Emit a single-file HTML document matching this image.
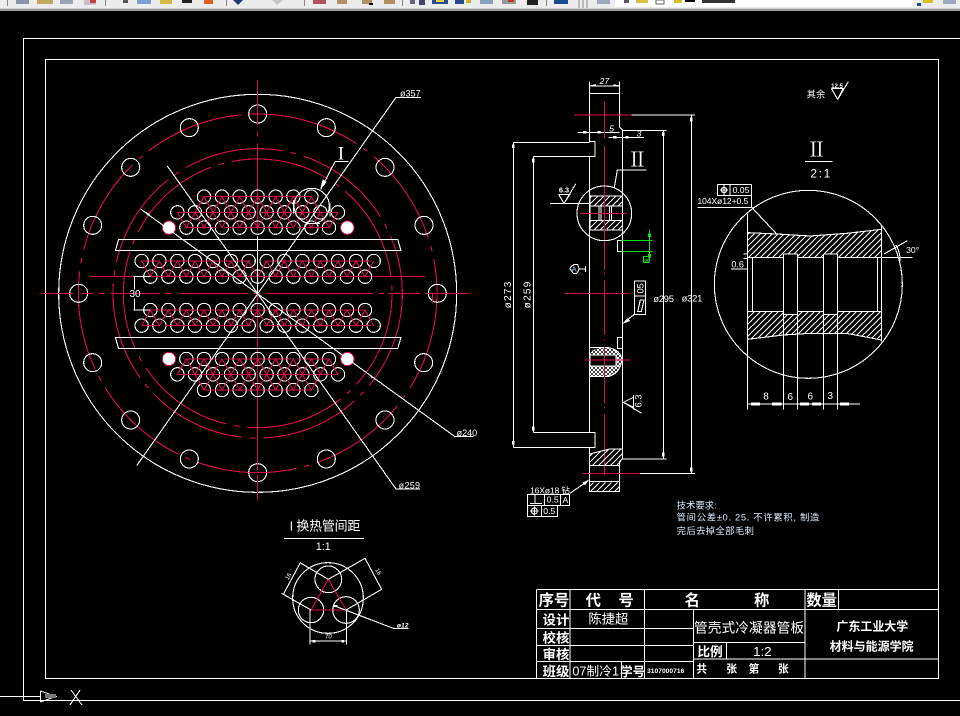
<!DOCTYPE html>
<html><head><meta charset="utf-8"><style>
html,body{margin:0;padding:0;background:#000;width:960px;height:716px;overflow:hidden}
svg{display:block;position:absolute;left:0;top:0}
.w{fill:none;stroke:#fff;stroke-width:3.3}
.r{fill:none;stroke:#dc0a46;stroke-width:3.3}
.g{fill:none;stroke:#10e020;stroke-width:3.3}
.c{fill:none;stroke:#dc0a46;stroke-width:3.3;stroke-dasharray:300 24 16 24}
text{fill:#fff;font-family:"Liberation Sans","WenQuanYi Zen Hei","Noto Sans CJK SC",sans-serif}
.m{text-anchor:middle}
.rn{font-family:"Noto Serif CJK SC","Liberation Serif",serif}
</style></head><body>
<svg width="960" height="716" viewBox="0 0 960 716" shape-rendering="crispEdges">
<defs>
<pattern id="h" width="18" height="18" patternUnits="userSpaceOnUse"><path d="M-2 20L20 -2M-2 2L2 -2M16 20L20 16" stroke="#fff" stroke-width="3" fill="none"/></pattern>
<pattern id="x" width="12" height="12" patternUnits="userSpaceOnUse"><path d="M0 12L12 0M0 0L12 12" stroke="#fff" stroke-width="3" fill="none"/></pattern>
<g id="t" class="w"><circle r="20"/></g>
<g id="r7"><use href="#t" x="-161"/><use href="#t" x="-107"/><use href="#t" x="-54"/><use href="#t" x="0"/><use href="#t" x="54"/><use href="#t" x="107"/><use href="#t" x="161"/></g>
<g id="r10"><use href="#t" x="-241"/><use href="#t" x="-188"/><use href="#t" x="-134"/><use href="#t" x="-80"/><use href="#t" x="-27"/><use href="#t" x="27"/><use href="#t" x="80"/><use href="#t" x="134"/><use href="#t" x="188"/><use href="#t" x="241"/></g>
<g id="r9"><use href="#t" x="-214"/><use href="#t" x="-161"/><use href="#t" x="-107"/><use href="#t" x="-54"/><use href="#t" x="0"/><use href="#t" x="54"/><use href="#t" x="107"/><use href="#t" x="161"/><use href="#t" x="214"/></g>
<g id="r14"><use href="#r10"/><use href="#t" x="-348"/><use href="#t" x="-295"/><use href="#t" x="295"/><use href="#t" x="348"/></g>
<g id="r13"><use href="#r9"/><use href="#t" x="-322"/><use href="#t" x="-268"/><use href="#t" x="268"/><use href="#t" x="322"/></g>
<g id="top3">
<use href="#r7" y="-290"/><use href="#r10" y="-243"/><use href="#r9" y="-197"/>
<path class="r" d="M-161 -290H161M-241 -243H-10M10 -243H241M-214 -197H-120M-100 -197H100M120 -197H214"/>
<path class="r" d="M-188 -243L-161 -290L-134 -243L-107 -290L-80 -243L-54 -290L-27 -243L0 -290L27 -243L54 -290L80 -243L107 -290L134 -243L161 -290L188 -243"/>
<path class="r" d="M-241 -243L-214 -197L-188 -243L-161 -197L-134 -243L-107 -197L-80 -243L-54 -197L-27 -243L0 -197L27 -243L54 -197L80 -243L107 -197L134 -243L161 -197L188 -243L214 -197L241 -243"/>
</g>
<g id="mid2">
<use href="#r14" y="-97"/><use href="#r13" y="-50"/>
<path class="r" d="M-348 -97H-300M-280 -97H-20M20 -97H340M-322 -50H322"/>
<path class="r" d="M-348 -97L-322 -50L-295 -97L-268 -50L-241 -97L-214 -50L-188 -97L-161 -50L-134 -97L-107 -50L-80 -97L-54 -50L-27 -97L0 -50L27 -97L54 -50L80 -97L107 -50L134 -97L161 -50L188 -97L214 -50L241 -97L268 -50L295 -97L322 -50L348 -97"/>
</g>
</defs>

<!-- toolbar -->
<rect x="0" y="0" width="960" height="9" fill="#ececec"/>
<rect x="0" y="8" width="960" height="1" fill="#d0d0d0"/>
<rect x="0" y="9" width="960" height="2" fill="#9a9a9a"/>
<g shape-rendering="auto">
<rect x="7" y="0" width="1" height="6" fill="#888"/><rect x="105" y="0" width="1" height="6" fill="#888"/><rect x="226" y="0" width="1" height="6" fill="#888"/><rect x="304" y="0" width="1" height="6" fill="#888"/><rect x="402" y="0" width="1" height="6" fill="#888"/><rect x="546" y="0" width="1" height="6" fill="#888"/>
<rect x="16" y="0" width="13" height="4" fill="#8a94a8"/><rect x="37" y="0" width="16" height="4" fill="#c0a860"/><rect x="60" y="0" width="13" height="4" fill="#9aa4b8"/><rect x="84" y="0" width="12" height="5" fill="#c8c0c0"/><rect x="90" y="0" width="6" height="3" fill="#c04040"/>
<rect x="123" y="0" width="5" height="3" fill="#555"/><rect x="137" y="0" width="14" height="4" fill="#7aa0d0"/><rect x="160" y="0" width="12" height="4" fill="#d8b840"/><rect x="182" y="0" width="10" height="3" fill="#222"/><rect x="204" y="0" width="9" height="4" fill="#e06020"/>
<path d="M233 0H243L238 5Z" fill="#1a3a70"/><path d="M272 0H283L277 5Z" fill="#c8c8c8"/>
<rect x="313" y="0" width="13" height="4" fill="#b05060"/><rect x="337" y="0" width="10" height="4" fill="#b09060"/><rect x="362" y="0" width="10" height="4" fill="#b09060"/><rect x="369" y="3" width="4" height="2" fill="#000"/><rect x="384" y="0" width="11" height="4" fill="#b09060"/>
<rect x="410" y="0" width="5" height="4" fill="#667"/><rect x="419" y="0" width="6" height="5" fill="#446"/><rect x="432" y="0" width="16" height="4" fill="#2a4a90"/><rect x="436" y="0" width="8" height="2" fill="#e8d040"/><rect x="455" y="0" width="9" height="4" fill="#2a4a90"/><rect x="466" y="0" width="5" height="3" fill="#d0b020"/>
<rect x="480" y="0" width="13" height="4" fill="#8aa0b8"/><rect x="502" y="0" width="14" height="4" fill="#999"/><rect x="508" y="0" width="6" height="2" fill="#c03030"/><rect x="527" y="0" width="11" height="5" fill="#222"/><rect x="554" y="0" width="14" height="4" fill="#1a4a90"/>
<rect x="578" y="0" width="2" height="8" fill="#bbb"/><rect x="582" y="0" width="2" height="8" fill="#bbb"/><rect x="586" y="0" width="2" height="8" fill="#bbb"/>
<rect x="597" y="0" width="13" height="4" fill="#a0a8c0"/>
<rect x="615" y="0" width="298" height="7" fill="#fff"/>
<rect x="624" y="0" width="5" height="3" fill="#556"/><rect x="636" y="0" width="12" height="3" fill="#d8c040"/><rect x="656" y="0" width="8" height="4" fill="none" stroke="#667"/><rect x="674" y="0" width="8" height="3" fill="#d8c020"/><rect x="685" y="0" width="10" height="2" fill="#000"/>
<rect x="702" y="0" width="33" height="3" fill="#333"/>
<rect x="917" y="3" width="4" height="3" fill="#1a4a90"/><rect x="923" y="0" width="10" height="3" fill="#d8c020"/><rect x="943" y="0" width="13" height="4" fill="#a0a8c0"/>
</g>

<!-- frames -->
<path d="M960 38.500H23.500V700.500H960" fill="none" stroke="#fff" stroke-width="1"/>
<path d="M45.500 59.500H938.500V678.500H45.500Z" fill="none" stroke="#fff" stroke-width="1"/>

<!-- UCS -->
<path d="M0 696.500H41" stroke="#fff" fill="none"/>
<path d="M40.500 691V702M40.500 691L56 696.500L40.500 702" stroke="#fff" fill="none"/>
<path d="M45 694H56V698H45Z" fill="#777"/>
<path d="M71 690L82 705M80 690L70 705" stroke="#fff" fill="none"/>

<!-- Main view (zoom coords) -->
<g transform="translate(40 80) scale(.33333)">
<circle class="w" cx="653" cy="640" r="597"/>
<circle class="c" cx="653" cy="640" r="538" stroke-dasharray="260 22 14 22"/>
<circle class="c" cx="653" cy="640" r="434"/>
<circle class="c" cx="653" cy="640" r="403"/>
<g class="w">
<circle cx="653" cy="102" r="27"/><circle cx="859" cy="143" r="27"/><circle cx="1035" cy="262" r="27"/><circle cx="1152" cy="436" r="27"/><circle cx="1192" cy="640" r="27"/><circle cx="1151" cy="848" r="27"/><circle cx="1035" cy="1020" r="27"/><circle cx="859" cy="1137" r="27"/><circle cx="653" cy="1178" r="27"/><circle cx="448" cy="1137" r="27"/><circle cx="272" cy="1020" r="27"/><circle cx="158" cy="848" r="27"/><circle cx="116" cy="640" r="27"/><circle cx="158" cy="436" r="27"/><circle cx="272" cy="262" r="27"/><circle cx="448" cy="143" r="27"/>
</g>
<path class="r" d="M4 640H100M125 640H160M175 640H195M215 640H360M380 640H395M415 640H625M640 640H660M680 640H1000M1015 640H1030M1045 640H1140M1155 640H1285"/>
<path class="r" d="M653 0V135M653 155V170M653 190V450M653 530V1170M653 1185V1260"/>
<path class="r" d="M150 590H1155M625 102H681M625 1178H681M1178 640V670"/>
<g transform="translate(653 640)">
<use href="#top3"/><use href="#mid2"/>
<g transform="scale(1 -1)"><use href="#top3"/><use href="#mid2"/></g>
</g>
<path class="w" d="M236 478H1073L1083 512H226ZM226 772H1083L1073 806H236Z"/>
<path d="M653 470V640" stroke="#fff" stroke-width="3.3"/>
<g fill="#fff" stroke="#dc0a46" stroke-width="3"><circle cx="387" cy="443" r="20"/><circle cx="922" cy="443" r="20"/><circle cx="387" cy="837" r="20"/><circle cx="922" cy="837" r="20"/></g>
<path class="w" d="M290 1157L1068 52H1143M382 258L1068 1227H1140M303 388L1245 1070H1300M885 245H925V245M885 245L842 328M280 590H332M280 690H330M283 590V628M283 655V690"/>
<path d="M840 330L848 298L860 306Z" fill="#fff"/><path d="M303 388L330 402L325 408Z" fill="#fff"/><path d="M985 880L1000 892L995 895Z" fill="#fff"/>
<circle class="w" cx="815" cy="378" r="53"/>
<path class="w" d="M760 360V400M870 370V410M800 430H840"/>
<text x="903" y="238" class="m" style="font-family:'Liberation Serif',serif" font-size="56">I</text>
<text x="1080" y="49" font-size="27" textLength="62">ø357</text>
<text x="1076" y="1226" font-size="27" textLength="64">ø259</text>
<text x="1250" y="1068" font-size="27">ø240</text>
<text x="285" y="651" class="m" font-size="30">30</text>
</g>

<!-- Side view -->
<g transform="translate(490 70) scale(.33333)">
<path class="w" d="M298 70H388M298 35V215H315V260H298V1087H315V1132H298V1265H388V1175L398 1165V180L388 170V35M298 48H388M298 1187H388M298 1235H388"/>
<path class="w" d="M70 217H298M130 260H298M130 1087H298M70 1132H298M70 217V1132M130 260V1087M398 182H530M520 182V1167M398 1167H530M425 135H615M604 135V1210M450 1210H615"/>
<path class="w" d="M262 187H388M355 202H462M436 182L447 182"/>
<g fill="#fff"><rect x="66" y="224" width="8" height="10"/><rect x="66" y="1113" width="8" height="10"/><rect x="126" y="266" width="8" height="12"/><rect x="126" y="1070" width="8" height="12"/><rect x="516" y="186" width="8" height="12"/><rect x="516" y="1148" width="8" height="12"/><rect x="600" y="142" width="8" height="12"/><rect x="600" y="1193" width="8" height="12"/><rect x="279" y="183" width="10" height="8"/><rect x="322" y="183" width="10" height="8"/><rect x="369" y="198" width="10" height="8"/><rect x="406" y="198" width="10" height="8"/></g>
<path class="w" d="M300 48L318 44M388 48L370 44"/>
<path class="r" d="M252 135H425M225 670H415M270 430H410M285 870H422M278 1210H450M343 93V205M343 228V600M343 608V612M343 630V795M343 808V812M343 830V1000M343 1010V1014M343 1033V1215"/>
<text x="343" y="42" class="m" font-size="26" font-style="italic">27</text>
<text x="365" y="184" class="m" font-size="26" font-style="italic">5</text>
<text x="447" y="199" class="m" font-size="26" font-style="italic">3</text>
<text x="442" y="290" class="m rn" font-size="60">Ⅱ</text>
<path class="w" d="M470 300H382L373 352"/>
<circle class="w" cx="343" cy="430" r="82"/>
<path d="M300 380H397V408H300ZM300 452H397V480H360L343 476L330 480H300Z" fill="url(#h)"/>
<path class="w" d="M300 378H397M300 408H397V452H300V408M300 480H397M327 408V452M333 408V452M358 408V452M365 408V452M300 378V480"/>
<path class="r" d="M270 430H410M343 370V495"/>
<path class="w" d="M382 511H398V544H382ZM382 802H398V835H382Z"/>
<path class="g" d="M395 511H488M395 544H488M478 478V575M461 560H477V577H461Z"/>
<g fill="#10e020"><rect x="474" y="491" width="9" height="10"/><rect x="474" y="552" width="9" height="10"/></g>
<text x="469" y="577" class="m" font-size="20" style="fill:#10e020">ø</text>
<path d="M300 855C300 845 315 833 340 833H355C380 833 395 855 395 870C395 895 375 920 340 920H300ZM300 855V888H378V855Z" fill="url(#x)" fill-rule="evenodd"/>
<path class="w" d="M300 855H378V888H300Z"/>
<path class="w" d="M298 833H355Q395 840 395 872Q390 910 355 920H298"/>
<path class="r" d="M285 870H422M343 830V960"/>
<path class="w" d="M180 400H298M205 373H240L222 400L207 375M222 400L257 342"/>
<text x="222" y="368" class="m" font-size="22" font-weight="bold">6.3</text>
<path class="w" d="M243 590L252 584H263L268 597L260 610H250L240 597ZM268 597H287M287 588V606"/>
<text x="252" y="605" class="m" font-size="23" style="fill:#9cf">A</text>
<path class="w" d="M433 633H467V733H433ZM433 678H467M433 733L402 758"/>
<path d="M397 762L412 745L420 753Z" fill="#fff"/>
<text transform="translate(460 655) rotate(-90)" class="m" font-size="28">05</text>
<path class="w" d="M443 725L451 690H462L454 725Z"/>
<text transform="translate(63 675) rotate(-90)" class="m" font-size="30" textLength="80">ø273</text>
<text transform="translate(122 675) rotate(-90)" class="m" font-size="30" textLength="80">ø259</text>
<text x="521" y="696" class="m" font-size="28" textLength="62">ø295</text>
<text x="606" y="694" class="m" font-size="28" textLength="62">ø321</text>
<path class="w" d="M400 997L430 982V1012ZM430 975V1018M400 997L455 1030"/>
<text transform="translate(455 993) rotate(-90)" class="m" font-size="28">6.3</text>
<path d="M300 1152L360 1137H397V1165L388 1187H300Z" fill="url(#h)"/>
<path class="w" d="M300 1152L360 1137H397"/>
<rect x="300" y="1237" width="88" height="27" fill="url(#h)"/>
<path class="w" d="M240 1270L295 1232"/><path d="M298 1228L278 1238L285 1246Z" fill="#fff"/>
</g>

<!-- Detail II -->
<g transform="translate(690 70) scale(.33333)">
<circle class="w" cx="355" cy="643" r="282"/>
<path d="M173 488L260 492L360 498L470 490L575 478V562H443V552H400V562H323V552H280V562H173Z" fill="url(#h)"/>
<path d="M173 725H280V733H323V725H400V733H443V725H575V810L470 790H360L280 795L173 808Z" fill="url(#h)"/>
<path class="w" d="M173 430V1018M575 465V815M173 488L260 492L360 498L470 490L575 478M173 808L280 795L360 790L470 790L575 810M188 562V725M563 562V725M280 552V1018M323 552V1018M400 552V1018M443 552V1018M280 552H323M400 552H443M173 562H280M323 562H400M443 562H575M173 725H280M323 725H400M443 725H575M280 733H323M400 733H443"/>
<path class="w" d="M82 343H185V377H82ZM120 343V377M22 412H185V377M185 412L260 492M173 1002H510M575 562H668M582 552L652 512M618 525Q632 550 630 575M123 597H172M160 552H173M160 565H173"/>
<g fill="#fff"><rect x="183" y="998" width="27" height="9"/><rect x="246" y="998" width="28" height="9"/><rect x="330" y="998" width="27" height="9"/><rect x="366" y="998" width="27" height="9"/><rect x="450" y="998" width="27" height="9"/></g>
<path class="w" d="M102 345V375M90 360H114"/><circle class="w" cx="102" cy="360" r="8"/>
<text x="153" y="369" class="m" font-size="26">0.05</text>
<text x="22" y="402" font-size="26" textLength="153">104Xø12+0.5</text>
<text x="143" y="592" class="m" font-size="27">0.6</text>
<text x="668" y="549" class="m" font-size="26">30°</text>
<text x="228" y="988" class="m" font-size="30">8</text>
<text x="301" y="990" class="m" font-size="30">6</text>
<text x="361" y="988" class="m" font-size="30">6</text>
<text x="421" y="987" class="m" font-size="30">3</text>
<text x="380" y="260" class="m rn" font-size="60">Ⅱ</text>
<path class="w" d="M345 274H428"/>
<text x="391" y="322" class="m" font-size="36" textLength="60">2 : 1</text>
<text x="378" y="83" class="m" font-size="28">其余</text>
<path class="w" d="M424 55H460L443 88L475 35M424 55L443 88"/>
<text x="441" y="54" class="m" font-size="18" font-weight="bold">12.5</text>
</g>

<!-- Detail I -->
<g transform="translate(260 510) scale(.33333)">
<text x="195" y="62" class="m" font-size="39" textLength="212">I 换热管间距</text>
<path class="w" d="M72 86H312"/>
<text x="190" y="120" class="m" font-size="32">1:1</text>
<circle class="w" cx="204" cy="264" r="106"/>
<circle class="w" cx="205" cy="208" r="40"/><circle class="w" cx="153" cy="300" r="38"/><circle class="w" cx="258" cy="300" r="40"/>
<path class="r" d="M205 208L153 300H258Z"/>
<path class="w" d="M150 300V403M260 300V403M150 393H260M205 208L120 158M153 300L65 250M70 253L120 160M205 208L315 145M258 300L365 238M315 145L365 238M222 287L400 355H445"/>
<g fill="#fff"><rect x="158" y="390" width="8" height="7"/><rect x="244" y="390" width="8" height="7"/><rect x="220" y="285" width="12" height="6"/></g>
<text x="205" y="386" class="m" font-size="18" font-style="italic">70</text>
<text transform="translate(90 202) rotate(-60)" class="m" font-size="18">16</text>
<text transform="translate(350 188) rotate(60)" class="m" font-size="18">16</text>
<text x="428" y="352" class="m" font-size="20" font-style="italic" font-weight="bold">ø12</text>
</g>

<!-- Notes & tolerance frame -->
<g transform="translate(510 470) scale(.33333)">
<text x="500" y="115" font-size="28" style="fill:#dfeeff">技术要求:</text>
<text x="500" y="152" font-size="28" style="fill:#dfeeff" textLength="428">管间公差±0. 25. 不许累积, 制造</text>
<text x="500" y="192" font-size="28" style="fill:#dfeeff" textLength="232">完后去掉全部毛刺</text>
<path class="w" d="M52 73H178V107H52ZM103 73V107M152 73V107M52 107V139H142V107M95 107V139M75 75V101M60 101H96"/>
<text x="128" y="98" class="m" font-size="26">0.5</text>
<text x="166" y="99" class="m" font-size="26">A</text>
<text x="118" y="132" class="m" font-size="26">0.5</text>
<circle class="w" cx="73" cy="123" r="9"/><path class="w" d="M73 110V136M60 123H86"/>
<text x="60" y="70" font-size="26" textLength="120">16Xø18 钻</text>
</g>

<!-- Title block -->
<g transform="translate(530 580) scale(.33333)">
<path class="w" d="M20 28H1225M20 88H1225M20 145H490M20 197H490M20 245H490M490 187H825M490 237H1225M20 28V295M120 28V295M343 28V295M490 88V295M825 28V295M925 28V88M275 245V295M590 187V237"/>
<g font-weight="bold">
<text x="72" y="76" class="m" font-size="46">序号</text>
<text x="190" y="76" class="m" font-size="46">代</text>
<text x="288" y="76" class="m" font-size="46">号</text>
<text x="487" y="76" class="m" font-size="46">名</text>
<text x="695" y="76" class="m" font-size="46">称</text>
<text x="875" y="76" class="m" font-size="46">数量</text>
<text x="78" y="133" class="m" font-size="40">设计</text>
<text x="78" y="187" class="m" font-size="40">校核</text>
<text x="78" y="237" class="m" font-size="40">审核</text>
<text x="78" y="288" class="m" font-size="40">班级</text>
<text x="540" y="228" class="m" font-size="38">比例</text>
<text x="308" y="288" class="m" font-size="38">学号</text>
<text x="1027" y="152" class="m" font-size="36">广东工业大学</text>
<text x="1025" y="212" class="m" font-size="36">材料与能源学院</text>
<text x="407" y="279" class="m" font-size="20" textLength="112">3107000716</text>
<text x="515" y="278" class="m" font-size="32">共</text>
<text x="605" y="278" class="m" font-size="32">张</text>
<text x="672" y="278" class="m" font-size="32">第</text>
<text x="760" y="278" class="m" font-size="32">张</text>
</g>
<text x="235" y="130" class="m" font-size="40">陈捷超</text>
<text x="657" y="157" class="m" font-size="41" textLength="330">管壳式冷凝器管板</text>
<text x="697" y="228" class="m" font-size="40">1:2</text>
<text x="197" y="286" class="m" font-size="38" textLength="140">07制冷1</text>
</g>
</svg>
</body></html>
